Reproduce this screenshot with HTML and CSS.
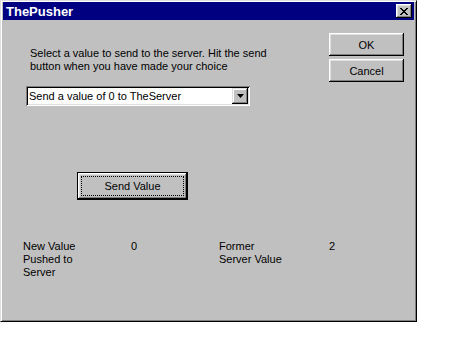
FILE: index.html
```html
<!DOCTYPE html>
<html lang="en">
<head>
    <meta charset="UTF-8">
    <title>ThePusher</title>
    <link rel="stylesheet" href="styles.css">
</head>
<body>
    <div class="window">
        <div class="titlebar">
            <span class="title">ThePusher</span>
            <button class="close-btn" aria-label="Close">
                <svg width="8" height="7" viewBox="0 0 8 7">
                    <path d="M0 0h2v1h1v1h2v-1h1v-1h2v1h-1v1h-1v1h-1v1h1v1h1v1h1v1h-2v-1h-1v-1h-2v1h-1v1h-2v-1h1v-1h1v-1h1v-1h-1v-1h-1v-1h-1z" fill="#000"/>
                </svg>
            </button>
        </div>
        <div class="client">
            <div class="top-row">
                <div class="chooser">
                    <p class="prompt">Select a value to send to the server. Hit the send<br>button when you have made your choice</p>
                    <div class="combo">
                        <span class="combo-text">Send a value of 0 to TheServer</span>
                        <span class="combo-arrow">
                            <svg width="7" height="4" viewBox="0 0 7 4"><path d="M0 0h7l-3.5 4z" fill="#000"/></svg>
                        </span>
                    </div>
                </div>
                <div class="dialog-buttons">
                    <button class="btn">OK</button>
                    <button class="btn">Cancel</button>
                </div>
            </div>
            <div class="send-row">
                <button class="btn btn-default"><span class="focus">Send Value</span></button>
            </div>
            <div class="stats">
                <div class="label">New Value<br>Pushed to<br>Server</div>
                <div class="value">0</div>
                <div class="label">Former<br>Server Value</div>
                <div class="value">2</div>
            </div>
        </div>
    </div>
</body>
</html>
```

FILE: styles.css
```css
body {
    margin: 0;
    background: #ffffff;
    font-family: "Liberation Sans", Arial, sans-serif;
    font-size: 11px;
    color: #000000;
}

.window {
    width: 417px;
    height: 322px;
    box-sizing: border-box;
    background: #c0c0c0;
    border: 1px solid;
    border-color: #dfdfdf #000000 #000000 #dfdfdf;
    box-shadow: inset 1px 1px #ffffff, inset -1px -1px #808080;
    padding: 1px 2px 2px 2px;
}

.titlebar {
    height: 18px;
    background: #000080;
    display: flex;
    align-items: center;
    justify-content: space-between;
    padding: 0 2px 0 3px;
}

.title {
    color: #ffffff;
    font-weight: bold;
    font-size: 13px;
}

.close-btn {
    width: 16px;
    height: 14px;
    padding: 0;
    border: none;
    background: #c0c0c0;
    box-shadow: inset -1px -1px #000000, inset 1px 1px #ffffff, inset -2px -2px #808080, inset 2px 2px #dfdfdf;
    display: flex;
    align-items: center;
    justify-content: center;
}

.client {
    padding: 0 10px 0 20px;
}

.top-row {
    display: flex;
    justify-content: space-between;
}

.chooser {
    padding: 27px 0 0 3px;
}

.prompt {
    margin: 0 0 13px 4px;
    line-height: 13px;
}

.combo {
    width: 224px;
    height: 20px;
    box-sizing: border-box;
    background: #ffffff;
    box-shadow: inset 1px 1px #808080, inset -1px -1px #ffffff, inset 2px 2px #000000, inset -2px -2px #dfdfdf;
    display: flex;
    align-items: center;
    justify-content: space-between;
    padding: 2px 2px 2px 3px;
}

.combo-arrow {
    width: 16px;
    height: 16px;
    background: #c0c0c0;
    box-shadow: inset -1px -1px #000000, inset 1px 1px #dfdfdf, inset -2px -2px #808080, inset 2px 2px #ffffff;
    display: flex;
    align-items: center;
    justify-content: center;
}

.dialog-buttons {
    padding-top: 13px;
    display: flex;
    flex-direction: column;
    gap: 3px;
}

.btn {
    width: 75px;
    height: 23px;
    border: none;
    padding: 0;
    background: #c0c0c0;
    font-family: "Liberation Sans", Arial, sans-serif;
    font-size: 11px;
    color: #000000;
    box-shadow: inset -1px -1px #000000, inset 1px 1px #ffffff, inset -2px -2px #808080, inset 2px 2px #dfdfdf;
}

.send-row {
    padding: 66px 0 0 54px;
}

.btn-default {
    width: 111px;
    height: 28px;
    border: 1px solid #000000;
    padding: 3px;
    box-sizing: border-box;
    display: flex;
}

.focus {
    flex: 1;
    border: 1px dotted #000000;
    display: flex;
    align-items: center;
    justify-content: center;
}

.stats {
    margin-top: 40px;
    display: grid;
    grid-template-columns: 108px 88px 110px 1fr;
    line-height: 13px;
}
```
